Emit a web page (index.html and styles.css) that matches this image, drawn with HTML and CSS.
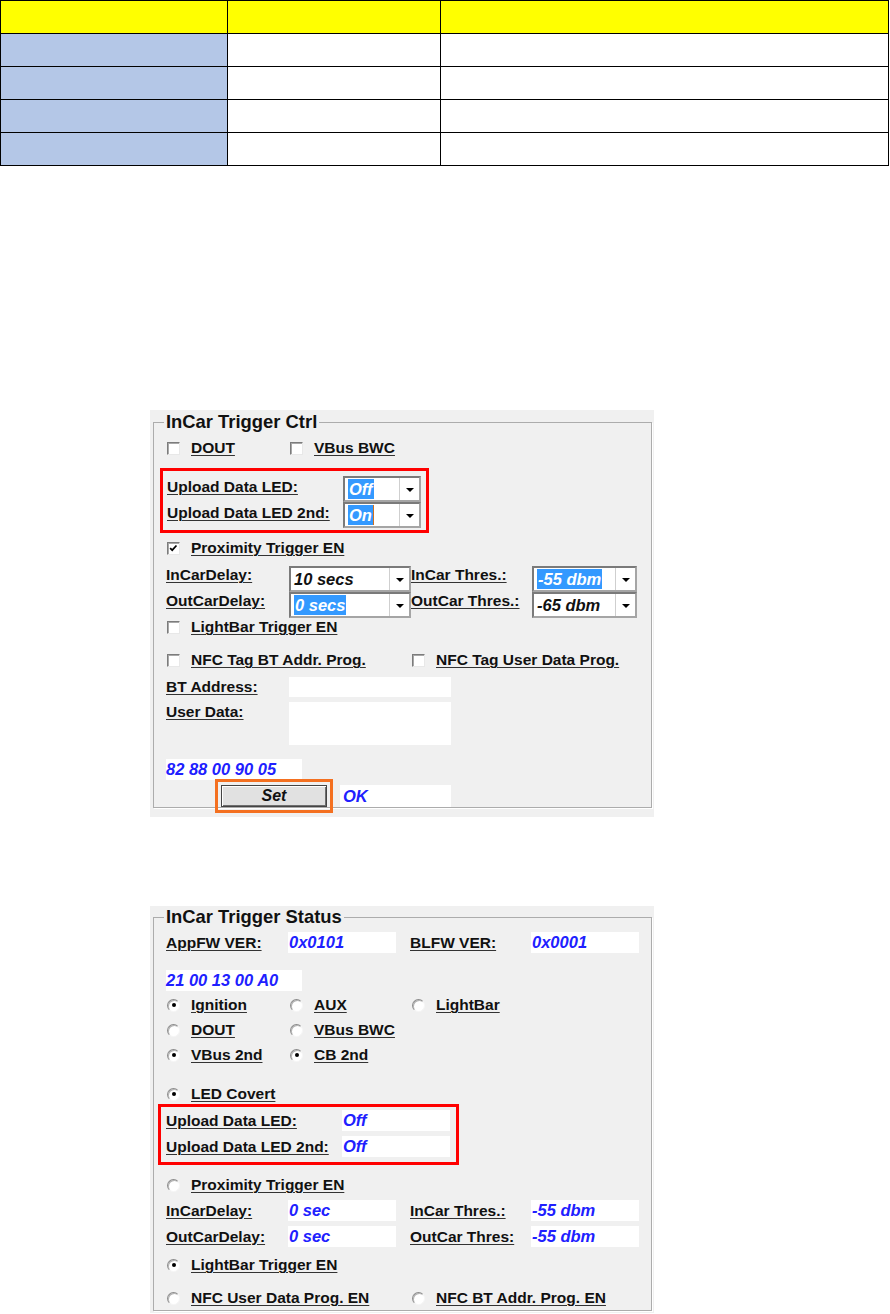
FILE: index.html
```html
<!DOCTYPE html>
<html lang="en">
<head>
    <meta charset="UTF-8">
    <title>InCar Trigger</title>
    <link rel="stylesheet" href="styles.css">
</head>
<body>
    <table class="spec">
        <colgroup><col class="c1"><col class="c2"><col class="c3"></colgroup>
        <tr><th></th><th></th><th></th></tr>
        <tr><td class="key"></td><td></td><td></td></tr>
        <tr><td class="key"></td><td></td><td></td></tr>
        <tr><td class="key"></td><td></td><td></td></tr>
        <tr><td class="key"></td><td></td><td></td></tr>
    </table>

    <!-- control dialog -->
    <div class="panel ctrl">
        <fieldset class="group">
            <legend>InCar Trigger Ctrl</legend>

            <div class="row opts" style="margin-top:7px">
                <label class="opt"><span class="box"></span><span class="lbl">DOUT</span></label>
                <label class="opt"><span class="box"></span><span class="lbl">VBus BWC</span></label>
            </div>

            <div class="mark led-ctrl">
                <div class="pair">
                    <span class="lbl">Upload Data LED:</span>
                    <div class="combo"><span class="val"><span class="sel">Off</span></span><span class="drop"></span></div>
                </div>
                <div class="pair">
                    <span class="lbl">Upload Data LED 2nd:</span>
                    <div class="combo"><span class="val"><span class="sel caret">On</span></span><span class="drop"></span></div>
                </div>
            </div>

            <div class="row opts" style="margin-top:6px">
                <label class="opt"><span class="box"><svg viewBox="0 0 13 13" width="11" height="11"><path d="M2.5 6 L5 8.5 L10 3" fill="none" stroke="#000" stroke-width="2"/></svg></span><span class="lbl">Proximity Trigger EN</span></label>
            </div>

            <div class="delays">
                <span class="lbl">InCarDelay:</span>
                <div class="combo"><span class="val">10 secs</span><span class="drop"></span></div>
                <span class="lbl">InCar Thres.:</span>
                <div class="combo"><span class="val"><span class="sel">-55 dbm</span></span><span class="drop"></span></div>
                <span class="lbl">OutCarDelay:</span>
                <div class="combo"><span class="val"><span class="sel">0 secs</span></span><span class="drop"></span></div>
                <span class="lbl">OutCar Thres.:</span>
                <div class="combo"><span class="val">-65 dbm</span><span class="drop"></span></div>
            </div>

            <div class="row opts">
                <label class="opt"><span class="box"></span><span class="lbl">LightBar Trigger EN</span></label>
            </div>

            <div class="row opts wide" style="margin-top:15px">
                <label class="opt"><span class="box"></span><span class="lbl">NFC Tag BT Addr. Prog.</span></label>
                <label class="opt"><span class="box"></span><span class="lbl">NFC Tag User Data Prog.</span></label>
            </div>

            <div class="entry" style="margin-top:8px">
                <span class="lbl">BT Address:</span>
                <div class="field"></div>
            </div>
            <div class="entry tall" style="margin-top:5px">
                <span class="lbl">User Data:</span>
                <div class="field"></div>
            </div>

            <div class="field hex" style="margin-top:14px">82 88 00 90 05</div>

            <div class="set-row">
                <button class="btn">Set</button>
                <div class="field">OK</div>
            </div>
        </fieldset>
    </div>

    <!-- status dialog -->
    <div class="panel status">
        <fieldset class="group">
            <legend>InCar Trigger Status</legend>

            <div class="info" style="margin-top:5px">
                <span class="lbl">AppFW VER:</span>
                <div class="field">0x0101</div>
                <span class="lbl">BLFW VER:</span>
                <div class="field">0x0001</div>
            </div>

            <div class="field hex" style="margin-top:17px">21 00 13 00 A0</div>

            <div class="row opts" style="margin-top:5px">
                <label class="opt"><span class="radio on"></span><span class="lbl">Ignition</span></label>
                <label class="opt"><span class="radio"></span><span class="lbl">AUX</span></label>
                <label class="opt"><span class="radio"></span><span class="lbl">LightBar</span></label>
            </div>
            <div class="row opts" style="margin-top:7px">
                <label class="opt"><span class="radio"></span><span class="lbl">DOUT</span></label>
                <label class="opt"><span class="radio"></span><span class="lbl">VBus BWC</span></label>
            </div>
            <div class="row opts" style="margin-top:7px">
                <label class="opt"><span class="radio on"></span><span class="lbl">VBus 2nd</span></label>
                <label class="opt"><span class="radio on"></span><span class="lbl">CB 2nd</span></label>
            </div>

            <div class="row opts" style="margin-top:21px">
                <label class="opt"><span class="radio on"></span><span class="lbl">LED Covert</span></label>
            </div>

            <div class="mark led-status">
                <div class="pair">
                    <span class="lbl">Upload Data LED:</span>
                    <div class="field">Off</div>
                </div>
                <div class="pair">
                    <span class="lbl">Upload Data LED 2nd:</span>
                    <div class="field">Off</div>
                </div>
            </div>

            <div class="row opts" style="margin-top:11px">
                <label class="opt"><span class="radio"></span><span class="lbl">Proximity Trigger EN</span></label>
            </div>

            <div class="info" style="margin-top:6px">
                <span class="lbl">InCarDelay:</span>
                <div class="field">0 sec</div>
                <span class="lbl">InCar Thres.:</span>
                <div class="field">-55 dbm</div>
            </div>
            <div class="info" style="margin-top:5px">
                <span class="lbl">OutCarDelay:</span>
                <div class="field">0 sec</div>
                <span class="lbl">OutCar Thres:</span>
                <div class="field">-55 dbm</div>
            </div>

            <div class="row opts" style="margin-top:9px">
                <label class="opt"><span class="radio on"></span><span class="lbl">LightBar Trigger EN</span></label>
            </div>

            <div class="row opts wide" style="margin-top:15px">
                <label class="opt"><span class="radio"></span><span class="lbl">NFC User Data Prog. EN</span></label>
                <label class="opt"><span class="radio"></span><span class="lbl">NFC BT Addr. Prog. EN</span></label>
            </div>
        </fieldset>
    </div>
</body>
</html>
```

FILE: styles.css
```css
body {
    margin: 0;
    font-family: "Liberation Sans", Arial, sans-serif;
    background: #fff;
    color: #111;
}

/* top table */
.spec {
    border-collapse: collapse;
    table-layout: fixed;
    width: 889px;
}
.spec .c1 { width: 227px; }
.spec .c2 { width: 213px; }
.spec th,
.spec td {
    border: 1px solid #000;
    height: 32px;
    padding: 0;
}
.spec th {
    background: #ffff00;
}
.spec .key {
    background: #b4c7e7;
}

/* dialog panels */
.panel {
    width: 504px;
    height: 407px;
    margin-left: 150px;
    box-sizing: border-box;
    background: #f0f0f0;
    padding: 2px 2px 0 3px;
    overflow: hidden;
    font-size: 15.5px;
    font-weight: bold;
}
.panel.ctrl {
    margin-top: 244px;
}
.panel.status {
    margin-top: 89px;
    padding-top: 1px;
}
.group {
    margin: 0;
    padding: 0 10px 0 12px;
    border: 1px solid #acacac;
    box-shadow: 1px 1px 0 #fff;
}
.status .group {
    padding-bottom: 3px;
}
.group legend {
    font-size: 18.4px;
    line-height: 20px;
    padding: 0 2px;
    margin-left: -2px;
    color: #111;
}

.lbl {
    text-decoration: underline;
    text-underline-offset: 2px;
    text-decoration-thickness: 1px;
    text-decoration-color: #333;
    white-space: nowrap;
}

/* checkbox / radio rows */
.row {
    display: grid;
    grid-template-columns: 123px 122px auto;
    height: 18px;
    align-items: center;
}
.row.wide {
    grid-template-columns: 245px auto;
}
.opt {
    display: flex;
    align-items: center;
    white-space: nowrap;
}
.box {
    flex-shrink: 0;
    width: 13px;
    height: 13px;
    box-sizing: border-box;
    margin: 0 11px 0 1px;
    background: #fff;
    border: 1px solid;
    border-color: #7c7c7c #e8e8e8 #e8e8e8 #7c7c7c;
    box-shadow: inset 1px 1px 0 #a8a8a8;
    display: flex;
    align-items: center;
    justify-content: center;
}
.radio {
    flex-shrink: 0;
    width: 13px;
    height: 13px;
    box-sizing: border-box;
    margin: 0 11px 0 1px;
    border-radius: 50%;
    background: #fff;
    border: 1px solid;
    border-color: #8c8c8c #f6f6f6 #f6f6f6 #8c8c8c;
    box-shadow: inset 1px 1px 0 #b4b4b4;
    display: flex;
    align-items: center;
    justify-content: center;
}
.radio.on::after {
    content: "";
    width: 4px;
    height: 4px;
    border-radius: 50%;
    background: #000;
}

/* annotation boxes */
.mark {
    border: 3px solid #ff0000;
    box-sizing: border-box;
}
.led-ctrl {
    width: 269px;
    margin: 11px 0 0 -6px;
    padding: 5px 5px 2px 4px;
}
.led-status {
    width: 301px;
    margin: 1px 0 0 -8px;
    padding: 3px 6px 5px 5px;
    display: grid;
    row-gap: 5px;
}
.pair {
    display: grid;
    grid-template-columns: 176px 78px;
    height: 26px;
}
.led-status .pair {
    grid-template-columns: 176px 108px;
    height: 21px;
    align-items: center;
}
.led-ctrl .lbl {
    padding-top: 2px;
}

/* combo boxes */
.combo {
    display: flex;
    height: 26px;
    box-sizing: border-box;
    border: 2px solid;
    border-color: #7a7a7a #a5a5a5 #a5a5a5 #7a7a7a;
    background: #fff;
}
.combo .val {
    flex: 1;
    display: flex;
    align-items: center;
    padding-left: 3px;
    font-size: 16.5px;
    font-style: italic;
    color: #111;
}
.combo .sel {
    background: #3399ff;
    color: #fff;
    padding: 0 1px;
    line-height: 20px;
}
.combo .caret {
    border-right: 1px solid #d07020;
}
.combo .drop {
    flex-shrink: 0;
    width: 19px;
    border-left: 1px solid #cfcfcf;
    display: flex;
    align-items: center;
    justify-content: center;
}
.combo .drop::after {
    content: "";
    border-left: 4px solid transparent;
    border-right: 4px solid transparent;
    border-top: 4px solid #000;
    margin-top: 2px;
}

.delays {
    display: grid;
    grid-template-columns: 123px 122px 121px 105px;
    grid-template-rows: 26px 26px;
    margin-top: 9px;
}
.delays .lbl {
    align-self: start;
}

/* text fields */
.field {
    background: #fff;
    height: 21px;
    display: flex;
    align-items: center;
    padding-left: 1px;
    color: #2020ff;
    font-size: 16.5px;
    font-style: italic;
}
.entry {
    display: grid;
    grid-template-columns: 123px 162px;
    height: 20px;
    align-items: center;
}
.entry .field {
    height: 20px;
}
.entry.tall {
    height: 43px;
    align-items: start;
}
.entry.tall .field {
    height: 43px;
}
.entry.tall .lbl {
    padding-top: 1px;
}
.field.hex {
    width: 136px;
    padding-left: 0;
}
.info {
    display: grid;
    grid-template-columns: 122px 108px 14px 121px 108px;
    align-items: center;
}
.info .lbl:nth-of-type(2) {
    grid-column: 4;
}

/* set button row */
.set-row {
    display: flex;
    align-items: center;
    margin-top: 5px;
    height: 22px;
}
.btn {
    width: 106px;
    height: 22px;
    margin-left: 55px;
    box-sizing: border-box;
    background: #e1e1e1;
    border: 1px solid #444;
    box-shadow: inset 1px 1px 0 #fff, inset -1px -1px 0 #6e6e6e;
    font: italic bold 16px "Liberation Sans", Arial, sans-serif;
    color: #111;
    padding: 0;
    outline: 3px solid #f47020;
    outline-offset: 3px;
}
.set-row .field {
    width: 111px;
    height: 22px;
    margin-left: 13px;
    padding-left: 3px;
    box-sizing: border-box;
}
```
